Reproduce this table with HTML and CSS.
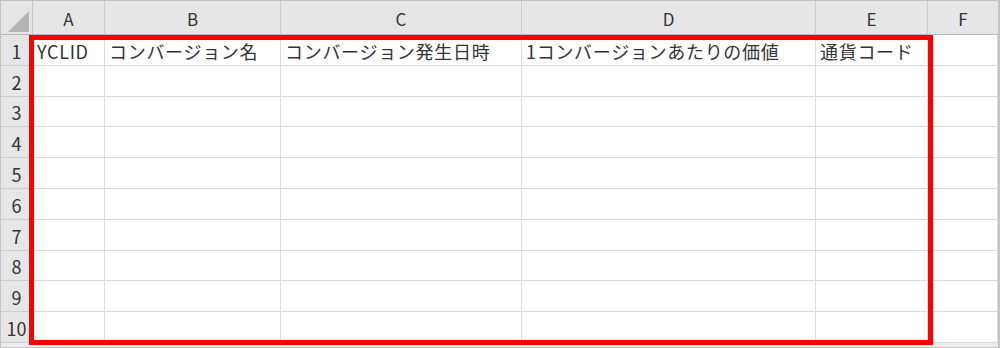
FILE: index.html
```html
<!DOCTYPE html>
<html lang="ja">
<head>
  <meta charset="UTF-8" />
  <meta name="viewport" content="width=device-width, initial-scale=1.0" />
  <title>コンバージョン取り込みテンプレート</title>
  <link rel="stylesheet" href="styles.css">
</head>
<body>
  <div class="sheet">
    <div class="grid">
      <div class="corner"><span class="tri"></span></div>
      <div class="colhead">A</div>
      <div class="colhead">B</div>
      <div class="colhead">C</div>
      <div class="colhead">D</div>
      <div class="colhead">E</div>
      <div class="colhead last">F</div>

      <div class="rowhead">1</div>
      <div class="cell">YCLID</div>
      <div class="cell">コンバージョン名</div>
      <div class="cell">コンバージョン発生日時</div>
      <div class="cell">1コンバージョンあたりの価値</div>
      <div class="cell">通貨コード</div>
      <div class="cell"></div>
    </div>
    <div class="grid" id="body"></div>
    <div class="selection"></div>
  </div>

  <script>
    // 2〜10行目の空セルを作る
    const body = document.getElementById('body');
    for (let r = 2; r <= 10; r++) {
      let html = '<div class="rowhead">' + r + '</div>';
      for (let c = 0; c < 6; c++) html += '<div class="cell"></div>';
      body.insertAdjacentHTML('beforeend', html);
    }
  </script>
</body>
</html>
```

FILE: styles.css
```css
body { margin: 0; background: #fff; font-family: "Noto Sans CJK JP", "Noto Sans", sans-serif; }
.sheet { position: relative; width: 1000px; height: 348px; box-sizing: border-box; border: 1px solid #c4c4c4; border-right-width: 2px; background: #ececec; overflow: hidden; }
.grid { display: grid; grid-template-columns: 32px 72px 176px 241px 294px 112px 1fr; grid-auto-rows: 30.8px; }
.grid:first-child { grid-template-rows: 34px 30.8px; }
.grid > div { box-sizing: border-box; display: flex; align-items: center; font-size: 18px; color: #333; white-space: nowrap; overflow: hidden; }
.corner { background: #e6e6e6; border-right: 1px solid #c8c8c8; border-bottom: 1px solid #b8b8b8; position: relative; }
.tri { position: absolute; left: 7px; top: 10px; width: 0; height: 0; border-left: 21px solid transparent; border-bottom: 21px solid #b5b5b5; }
.colhead { background: #e6e6e6; justify-content: center; border-right: 1px solid #cdcdcd; border-bottom: 1px solid #b8b8b8; font-size: 17px !important; padding-top: 2px; }
.colhead.last { border-right: none; }
.rowhead { background: #e6e6e6; justify-content: center; border-right: 1px solid #b8b8b8; border-bottom: 1px solid #cdcdcd; padding-top: 2px; }
.cell { background: #fff; border-right: 1px solid #dadada; border-bottom: 1px solid #dadada; padding: 2px 0 0 4px; letter-spacing: 0.7px; }
.selection { position: absolute; left: 28px; top: 34px; width: 904px; height: 310px; box-sizing: border-box; border: 5px solid #ff0000; }
```
